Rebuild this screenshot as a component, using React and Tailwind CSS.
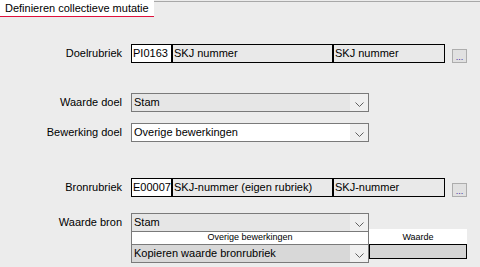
import React from "react";

const Chevron = () => (
  <svg width="9" height="5" viewBox="0 0 9 5" className="mt-[3px]">
    <path d="M0.5 0.5 L4.5 4.5 L8.5 0.5" fill="none" stroke="#606060" strokeWidth="1" />
  </svg>
);

const Select = ({ value, bg = "bg-white" }) => (
  <div className="flex h-full w-[238px] border border-[#7a7a7a] bg-[#f0f0f0]">
    <div className={`flex-1 ${bg} pl-[2px] leading-[17px]`}>{value}</div>
    <div className="flex w-[18px] items-center justify-center">
      <Chevron />
    </div>
  </div>
);

const Field = ({ value, w, white }) => (
  <div
    className={`h-full border border-black pl-[1px] leading-[17px] whitespace-nowrap overflow-hidden ${w} ${
      white ? "bg-white" : "bg-[#e9e9e9]"
    }`}
  >
    {value}
  </div>
);

const Label = ({ children }) => (
  <div className="w-[122px] shrink-0 text-right leading-[19px] text-black">{children}</div>
);

const Row = ({ label, className, children }) => (
  <div className={`flex h-[19px] ${className}`}>
    <Label>{label}</Label>
    <div className="ml-[9px] flex h-full">{children}</div>
  </div>
);

const DotsButton = () => (
  <div className="ml-[7px] mt-[5px] flex h-[14px] w-[15px] items-end justify-center border border-[#adadad] bg-[#e1e1e1] text-[9px] leading-[10px] text-[#3b2aa0]">
    ...
  </div>
);

const App = () => {
  return (
    <div
      className="h-[267px] w-[480px] overflow-hidden bg-[#ececec] text-[11px] text-black"
      style={{ fontFamily: '"Liberation Sans", Arial, sans-serif' }}
    >
      {/* tab strip */}
      <div className="flex h-[18px]">
        <div className="h-[17px] w-[154px] border-b border-[#e0103c] bg-white pl-[5px] leading-[16px]">
          Definieren collectieve mutatie
        </div>
        <div className="mt-[1px] flex-1 border-t border-[#a8a8a8]" />
      </div>

      {/* doel */}
      <Row label="Doelrubriek" className="mt-[26px]">
        <Field value="PI0163" w="w-[41px]" white />
        <Field value="SKJ nummer" w="w-[161px]" />
        <Field value="SKJ nummer" w="w-[112px]" />
        <DotsButton />
      </Row>

      <Row label="Waarde doel" className="mt-[30px]">
        <Select value="Stam" bg="bg-[#e6e6e6]" />
      </Row>

      <Row label="Bewerking doel" className="mt-[11px]">
        <Select value="Overige bewerkingen" />
      </Row>

      {/* bron */}
      <Row label="Bronrubriek" className="mt-[36px]">
        <Field value="E00007" w="w-[41px]" white />
        <Field value="SKJ-nummer (eigen rubriek)" w="w-[161px]" />
        <Field value="SKJ-nummer" w="w-[112px]" />
        <DotsButton />
      </Row>

      <Row label="Waarde bron" className="mt-[16px]">
        <Select value="Stam" bg="bg-[#e6e6e6]" />
      </Row>

      <div className="flex">
        <div className="ml-[131px] flex w-[238px] flex-col">
          <div className="h-[12px] border-x border-[#7a7a7a] bg-white text-center text-[9px] leading-[11px]">
            Overige bewerkingen
          </div>
          <div className="h-[19px]">
            <Select value="Kopieren waarde bronrubriek" bg="bg-[#d8d8d8]" />
          </div>
        </div>
        <div className="-mt-[3px] flex w-[98px] flex-col">
          <div className="h-[15px] bg-white pt-[3px] text-center text-[9px] leading-[11px]">Waarde</div>
          <div className="h-[15px] border border-black bg-[#d4d4d4]" />
        </div>
      </div>
    </div>
  );
};

export default App;
